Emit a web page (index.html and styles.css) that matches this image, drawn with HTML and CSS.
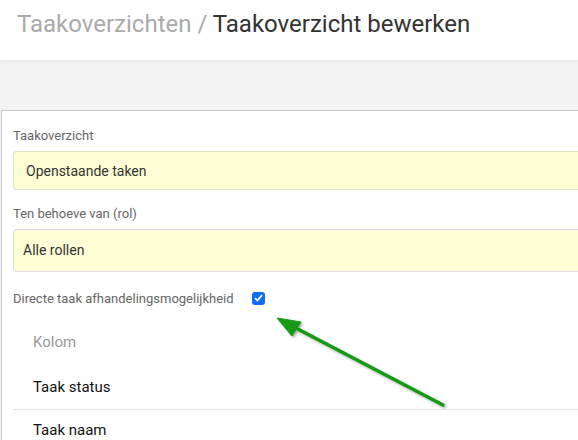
FILE: index.html
```html
<!DOCTYPE html>
<html lang="nl">
<head>
    <meta charset="UTF-8">
    <meta name="viewport" content="width=device-width, initial-scale=1.0">
    <title>Taakoverzicht bewerken</title>
    <link rel="stylesheet" href="styles.css">
</head>
<body>
    <header class="page-header">
        <h1><span class="crumb">Taakoverzichten /</span> Taakoverzicht bewerken</h1>
    </header>

    <div class="edit-card">
        <div class="form-group">
            <label for="overview">Taakoverzicht</label>
            <input type="text" id="overview" class="field" value="Openstaande taken">
        </div>
        <div class="form-group">
            <label for="role">Ten behoeve van (rol)</label>
            <div class="field field-select" id="role">Alle rollen</div>
        </div>
        <div class="check-row">
            <span>Directe taak afhandelingsmogelijkheid</span>
            <span class="check-box">
                <svg width="9" height="8" viewBox="0 0 9 8"><path d="M1 4.2 L3.4 6.5 L8 1.2" fill="none" stroke="#fff" stroke-width="1.8"/></svg>
            </span>
        </div>

        <table class="column-table">
            <thead>
                <tr><th>Kolom</th></tr>
            </thead>
            <tbody>
                <tr><td>Taak status</td></tr>
                <tr><td>Taak naam</td></tr>
            </tbody>
        </table>
    </div>

    <!-- annotation arrow pointing at the checkbox -->
    <svg class="pointer-arrow" width="578" height="440" viewBox="0 0 578 440">
        <defs>
            <filter id="arrowShadow" x="-10%" y="-10%" width="130%" height="130%">
                <feDropShadow dx="1.5" dy="1.5" stdDeviation="1" flood-color="#000" flood-opacity="0.35"/>
            </filter>
        </defs>
        <g filter="url(#arrowShadow)" fill="#159a15" stroke="#159a15">
            <line x1="443" y1="405" x2="294" y2="327" stroke-width="3.5" stroke-linecap="round"/>
            <polygon points="277,318 301,322 292,336" stroke-width="1" stroke-linejoin="round"/>
        </g>
    </svg>
</body>
</html>
```

FILE: styles.css
```css
body {
    margin: 0;
    padding: 0;
    background-color: #f4f4f4;
    font-family: Roboto, "Liberation Sans", Arial, sans-serif;
    overflow: hidden;
    height: 440px;
    position: relative;
}

.page-header {
    background-color: #ffffff;
    height: 60px;
    box-shadow: 0 1px 4px rgba(0, 0, 0, 0.08);
    position: relative;
}

.page-header h1 {
    margin: 0;
    padding: 9px 0 0 17px;
    font-size: 24px;
    font-weight: 400;
    line-height: 30px;
    color: #333;
}

.crumb {
    color: #aaa;
}

/* card runs on past the right edge, so no right border */
.edit-card {
    margin: 50px 0 0 1px;
    background-color: #ffffff;
    border: 1px solid #c8c8c8;
    border-right: none;
    border-bottom: none;
    padding: 16px 0 0 11px;
}

.form-group {
    margin-bottom: 15px;
}

label {
    display: block;
    font-size: 13px;
    line-height: 18px;
    color: #666;
    margin-bottom: 6px;
}

.field {
    display: block;
    box-sizing: border-box;
    width: 100%;
    height: 39px;
    background-color: #ffffd7;
    border: 1px solid #e4e4c4;
    border-right: none;
    border-radius: 4px 0 0 4px;
    padding: 0 12px;
    font-family: inherit;
    font-size: 14px;
    color: #333;
    outline: none;
}

.field-select {
    height: 43px;
    line-height: 41px;
    padding: 0 9px;
    border-color: #dedee2;
}

.check-row {
    display: flex;
    align-items: center;
    gap: 18px;
    font-size: 13px;
    color: #666;
    margin-top: 17px;
    height: 18px;
}

.check-box {
    width: 13px;
    height: 13px;
    border-radius: 3px;
    background-color: #0d6efd;
    display: flex;
    align-items: center;
    justify-content: center;
}

.column-table {
    width: 100%;
    border-collapse: collapse;
    margin-top: 11px;
    font-size: 15px;
}

.column-table th {
    text-align: left;
    font-weight: 400;
    color: #999;
    height: 47px;
    padding: 0 20px;
}

.column-table td {
    color: #111;
    height: 44px;
    padding: 0 20px;
    border-bottom: 1px solid #e4e4e4;
}

.column-table tr:last-child td {
    height: 40px;
    border-bottom: none;
}

.pointer-arrow {
    position: absolute;
    top: 0;
    left: 0;
    pointer-events: none;
}
```
